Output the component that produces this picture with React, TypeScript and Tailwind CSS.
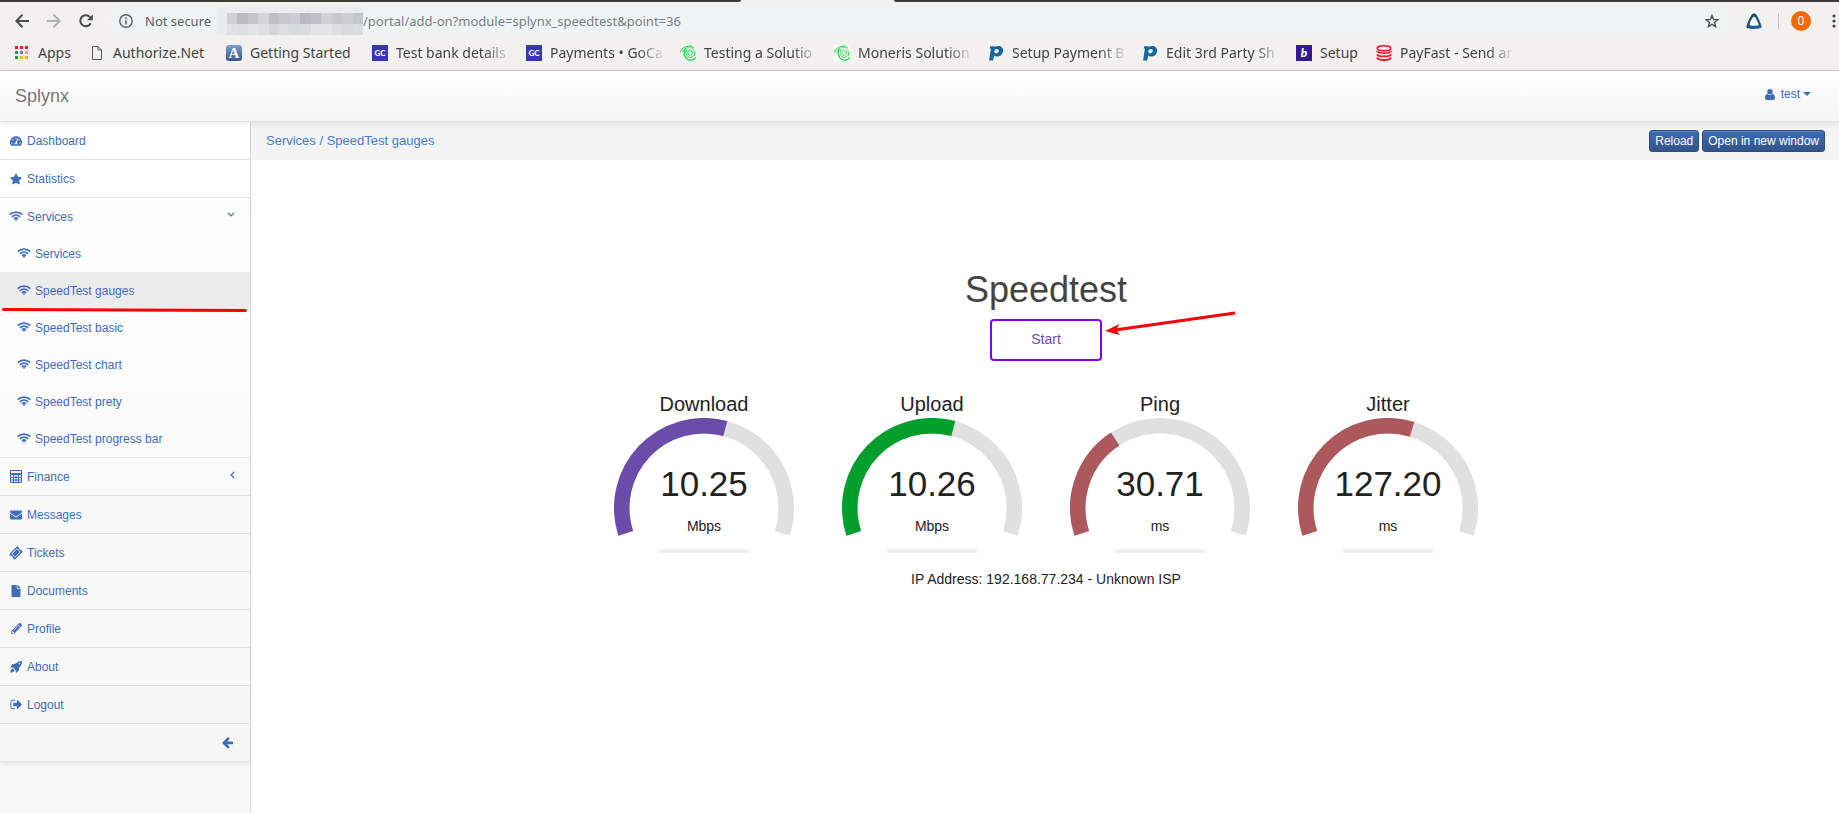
import React from "react";
import { FaEnvelope, FaFile, FaPencilAlt, FaStar, FaTachometerAlt, FaTicketAlt } from "react-icons/fa";

/* ---------- small drawings ---------- */

function AppsIcon() {
  const colors = ["#ee1c25", "#ee1c25", "#ee1c25", "#0f9d58", "#4285f4", "#f4b400", "#0f9d58", "#f4b400", "#f4b400"];
  return (
    <svg width="14" height="14" viewBox="0 0 14 14" aria-hidden="true">
      {colors.map((c, i) => (
        <rect key={i} x={(i % 3) * 5} y={Math.floor(i / 3) * 5} width="3" height="3" fill={c} />
      ))}
    </svg>
  );
}

function PageIcon() {
  return (
    <svg width="10" height="14" viewBox="0 0 10 14" fill="none" stroke="#555" aria-hidden="true">
      <path d="M.5.5H6L9.500 4v9.500H.5zM6 .5V4h3.500" />
    </svg>
  );
}

function LetterA() {
  return (
    <span className="flex size-4 items-center justify-center rounded-[3px] bg-linear-to-b from-[#7ba0cf] to-[#33578a] font-['Liberation_Serif',serif] text-[15px] leading-4 font-bold text-white">
      A
    </span>
  );
}

function GcIcon() {
  return (
    <span className="flex size-4 items-center justify-center bg-[#3636b8] font-['Lato',sans-serif] text-[8px] leading-4 font-black text-white">
      GC
    </span>
  );
}

function SwirlIcon() {
  return (
    <svg width="16" height="16" viewBox="0 0 16 16" fill="none" stroke="#16d23c" strokeLinecap="round" aria-hidden="true">
      <path d="M.6 7C1.500 2.800 6.500 .2 12 1.200" strokeWidth="1" />
      <path d="M2.500 6.500C4 3 8.500 1.300 13.500 2.600" strokeWidth=".7" />
      <path d="M5.200 4C3 7.500 4.200 13.200 9 14.800c3 .8 5.500-.6 6.300-2" strokeWidth="1.300" />
      <path d="M7.500 3.800C5 6 5.600 11 9.200 12.200c3 .7 5.400-1.500 5.500-4.200" strokeWidth=".9" />
      <path d="M10 4.300C7.500 5.400 7.200 9 9.300 10c2.100.7 3.700-1 3.400-2.900-.3-1.300-1.700-1.600-2.500-.9" strokeWidth=".9" />
      <path d="M12.500 3.500c2.500 1.200 3.300 4.500 2.300 7" strokeWidth=".7" />
    </svg>
  );
}

function PIcon() {
  return (
    <svg width="16" height="16" viewBox="0 0 16 16" aria-hidden="true">
      <path
        d="M2.200 1.200h4.600l-.2.900C7.600 1.300 8.800.9 10.200.9c3.300 0 5.100 2 4.800 5-.3 3.300-2.800 5.500-6 5.500-1.200 0-2.200-.3-3-.9l-.8 4.900H1.100L2.900 3.600H1.700zM8.800 4C7.300 4 6.300 5 6.200 6.300 6.100 7.600 6.900 8.400 8.200 8.400c1.500 0 2.500-1 2.600-2.300C10.900 4.800 10.100 4 8.800 4z"
        fill="#12679b"
      />
    </svg>
  );
}

function BIcon() {
  return (
    <span className="flex size-4 items-center justify-center bg-[#311b92] font-['Lato',sans-serif] text-[12px] leading-4 font-black text-white italic">
      b
    </span>
  );
}

function CoinsIcon() {
  return (
    <svg width="16" height="16" viewBox="0 0 16 16" fill="none" stroke="#f5142a" strokeWidth="1.600" aria-hidden="true">
      <ellipse cx="8" cy="3.300" rx="6.800" ry="2.500" />
      <path d="M1 6c1.200 2.800 12.800 2.800 14 0M1 9.300c1.200 2.800 12.800 2.800 14 0M1 12.500c1.200 3.400 12.800 3.400 14 0" strokeWidth="1.900" />
    </svg>
  );
}

function CalculatorIcon() {
  return (
    <svg width="12" height="13" viewBox="0 0 12 13" fill="none" stroke="currentColor" aria-hidden="true">
      <path d="M.5.5h11v12H.5zM.5 3.500h11M.5 4.500h11" />
      <path d="M.5 7.500h11M.5 10h11M3.500 4.500v8M6 4.500v8M8.500 4.500v8" />
    </svg>
  );
}

function WifiIcon() {
  return (
    <svg className="mb-0.5" width="14" height="10" viewBox="0 0 14 10" fill="none" stroke="currentColor" strokeWidth="1.700" aria-hidden="true">
      <path d="M.7 3.700C4.200.2 9.800.2 13.300 3.700" />
      <path d="M2.900 5.900c2.400-2.300 5.800-2.300 8.200 0" />
      <path d="M5 7.900c1.200-1.100 2.800-1.100 4 0" />
      <path d="M7 10 5.700 8.700c.8-.6 1.800-.6 2.600 0z" fill="currentColor" stroke="none" />
    </svg>
  );
}

function RocketIcon() {
  return (
    <svg width="12" height="12" viewBox="0 0 12 12" fill="currentColor" aria-hidden="true">
      <path
        fillRule="evenodd"
        d="M12 0c.1 3-.8 4.900-2.900 6.800L8.900 9.200 6 11.900l-.4-2.600L3 6.600.2 6.200 2.400 3.300l2.800-.3C7 .9 9 0 12 0zM9.400 1.800a.8.8 0 1 0 0 1.600.8.8 0 0 0 0-1.600z"
      />
      <path d="M2.600 7.500 4.600 9.400C3.800 10.800 2.500 11.600.4 11.600.4 9.700 1.100 8.200 2.600 7.500z" />
    </svg>
  );
}

function LogoutIcon() {
  return (
    <svg width="13" height="13" viewBox="0 0 1792 1792" fill="currentColor" aria-hidden="true">
      <path d="M704 1440q0 4 1 20t.5 26.500-3 23.500-10 19.500-20.500 6.500h-320q-119 0-203.500-84.500t-84.500-203.500v-704q0-119 84.500-203.500t203.500-84.500h320q13 0 22.500 9.500t9.500 22.500q0 4 1 20t.5 26.500-3 23.500-10 19.500-20.500 6.500h-320q-66 0-113 47t-47 113v704q0 66 47 113t113 47h312l11.500 1 11.500 3 8 5.500 7 9 2 13.500zm928-544q0 26-19 45l-544 544q-19 19-45 19t-45-19-19-45v-288h-448q-26 0-45-19t-19-45v-384q0-26 19-45t45-19h448v-288q0-26 19-45t45-19 45 19l544 544q19 19 19 45z" />
    </svg>
  );
}

function ArrowLeftIcon() {
  return (
    <svg width="13" height="13" viewBox="0 0 1792 1792" fill="currentColor" aria-hidden="true">
      <path d="M1664 896v128q0 53-32.500 90.500t-84.500 37.500h-704l293 294q38 36 38 90t-38 90l-75 76q-37 37-90 37-52 0-91-37l-651-652q-37-37-37-90 0-52 37-91l651-650q38-38 91-38 52 0 90 38l75 74q38 38 38 91t-38 91l-293 293h704q52 0 84.500 37.500t32.500 90.500z" />
    </svg>
  );
}

function UserIcon() {
  return (
    <svg width="10" height="11" viewBox="0 0 10 11" fill="currentColor" aria-hidden="true">
      <circle cx="5" cy="2.800" r="2.700" />
      <path d="M2.200 4.800C.8 5.300 0 6.800 0 9c0 1.300.7 2 1.800 2h6.400c1.100 0 1.800-.7 1.800-2 0-2.200-.8-3.700-2.200-4.200C6.200 6.400 3.800 6.400 2.200 4.800z" />
    </svg>
  );
}

function Chevron({ open }: { open: boolean }) {
  return open ? (
    <svg className="mr-[15px] mb-1" width="8" height="5" viewBox="0 0 8 5" fill="none" stroke="currentColor" aria-hidden="true">
      <path d="M1 .8 4 3.900 7 .8" strokeWidth="1.200" />
    </svg>
  ) : (
    <svg className="mr-[15px] mb-1" width="5" height="8" viewBox="0 0 5 8" fill="none" stroke="currentColor" aria-hidden="true">
      <path d="M4.200 1 1.100 4l3.100 3" strokeWidth="1.200" />
    </svg>
  );
}

/* ---------- browser bars ---------- */

const maskedHost = [
  ["#cfd2d5", "#b9bbc4", "#c3c7cb", "#d3d4d7", "#bfc2c4", "#c6cacd", "#cccdd3", "#b7b9c6", "#bfc1c6", "#cfd1d4", "#c6c9cc", "#cbcfd3", "#c3c6cc"],
  ["#dfe3e6", "#dde0e3", "#e3e6e8", "#dde1e4", "#d3d7d9", "#dadfe1", "#d6dbdd", "#d9dddd", "#e3e6e8", "#e3e6e8", "#dcdfe1", "#d6dadc", "#dadddf"],
];

function AddressBar() {
  return (
    <div className="flex h-[33px] items-center bg-[#f2f1f0] pt-[5px] pr-0.5 pl-[15px] text-[#4b4b4b]">
      <button type="button" aria-label="Back" className="w-8">
        <svg width="14" height="14" viewBox="0 0 14 14" fill="none" stroke="currentColor" strokeWidth="2" aria-hidden="true">
          <path d="M14 7H1.500M7.500 .8 1.300 7l6.200 6.200" />
        </svg>
      </button>
      <button type="button" aria-label="Forward" className="w-8 text-[#b0b0ae]">
        <svg width="14" height="14" viewBox="0 0 14 14" fill="none" stroke="currentColor" strokeWidth="2" aria-hidden="true">
          <path d="M0 7h12.500M6.500 .8 12.700 7l-6.200 6.200" />
        </svg>
      </button>
      <button type="button" aria-label="Refresh" className="w-7">
        <svg width="14" height="14" viewBox="0 0 14 14" aria-hidden="true">
          <path d="M11.700 9.200A5.500 5.500 0 1 1 11 3.200" fill="none" stroke="currentColor" strokeWidth="2" />
          <path d="M13.900.3v6H8z" fill="currentColor" />
        </svg>
      </button>
      <div className="flex h-7 min-w-0 flex-1 items-center rounded-full bg-[#eef3f4] pr-[10px] pl-3 font-['Noto_Sans',sans-serif] text-[13px] leading-5 whitespace-nowrap">
        <svg className="shrink-0" width="14" height="14" viewBox="0 0 14 14" fill="none" stroke="#5a5f63" strokeWidth="1.400" aria-hidden="true">
          <circle cx="7" cy="7" r="6.200" />
          <path d="M7 6.200v4.200M7 3.600v1.500" strokeWidth="1.600" />
        </svg>
        <span className="ml-3 w-[72px] text-[#5a5f63]">Not secure</span>
        <span className="flex h-7 w-[146px] flex-col bg-[#e9edef] pt-[6px] pl-[10px]" aria-hidden="true">
          {maskedHost.map((row, r) => (
            <span key={r} className="flex h-[11px]">
              {row.map((c, i) => (
                <span key={i} className="flex-1" style={{ backgroundColor: c }} />
              ))}
            </span>
          ))}
        </span>
        <span className="text-[#7b8084]">/portal/add-on?module=splynx_speedtest&amp;point=36</span>
        <button type="button" aria-label="Bookmark this page" className="ml-auto">
          <svg width="14" height="14" viewBox="0 0 24 24" fill="none" stroke="#4b4f52" strokeWidth="2.400" aria-hidden="true">
            <path d="m12 2.500 2.700 6.700 7.200.6-5.500 4.700 1.700 7.100L12 17.800l-6.100 3.800 1.700-7.100L2.100 9.800l7.200-.6z" />
          </svg>
        </button>
      </div>
      <svg className="ml-[17px]" width="16" height="16" viewBox="0 0 16 16" fill="none" aria-hidden="true">
        <defs>
          <linearGradient id="tri" x1="0" y1="0" x2="1" y2="1">
            <stop offset="0" stopColor="#17384c" />
            <stop offset="1" stopColor="#1c6fb0" />
          </linearGradient>
        </defs>
        <path d="M5.500 2C6.500 0 9.500 0 10.500 2c2.200 3.600 4 7.500 5 11 .3 1.200-.2 2-1.500 2.300-4 .8-8 .8-12 0C.7 15 .2 14.200.5 13c1-3.500 2.800-7.400 5-11z" fill="url(#tri)" />
        <path d="M8 3.500c-1.300 0-4.500 6.800-4.500 8.300 0 1.400 9 1.400 9 0C12.500 10.300 9.300 3.500 8 3.500z" fill="#fff" />
      </svg>
      <span className="mx-4 h-4 w-px bg-[#c4c6c8]" />
      <button
        type="button"
        aria-label="Profile 0"
        className="-ml-1 size-5 rounded-full bg-[#f56a00] font-['Noto_Sans',sans-serif] text-[12px] leading-5 text-white"
      >
        0
      </button>
      <button type="button" aria-label="Browser menu" className="ml-5">
        <svg width="6" height="14" viewBox="0 0 6 14" fill="#444" aria-hidden="true">
          <circle cx="3" cy="2" r="1.600" />
          <circle cx="3" cy="7" r="1.600" />
          <circle cx="3" cy="12" r="1.600" />
        </svg>
      </button>
    </div>
  );
}

type Bookmark = { icon: React.ReactNode; label: string; width: string; cut?: boolean };

const bookmarks: Bookmark[] = [
  { icon: <AppsIcon />, label: "Apps", width: "w-[75px]" },
  { icon: <PageIcon />, label: "Authorize.Net", width: "w-[137px]" },
  { icon: <LetterA />, label: "Getting Started", width: "w-[146px]" },
  { icon: <GcIcon />, label: "Test bank details", width: "w-[154px]", cut: true },
  { icon: <GcIcon />, label: "Payments • GoCa", width: "w-[154px]", cut: true },
  { icon: <SwirlIcon />, label: "Testing a Solutio", width: "w-[154px]", cut: true },
  {
    icon: (
      <span className="block bg-white">
        <SwirlIcon />
      </span>
    ),
    label: "Moneris Solution",
    width: "w-[154px]",
    cut: true,
  },
  { icon: <PIcon />, label: "Setup Payment B", width: "w-[154px]", cut: true },
  { icon: <PIcon />, label: "Edit 3rd Party Sh", width: "w-[154px]", cut: true },
  { icon: <BIcon />, label: "Setup", width: "w-[80px]" },
  { icon: <CoinsIcon />, label: "PayFast - Send ar", width: "w-[154px]", cut: true },
];

function BookmarksBar() {
  return (
    <nav
      aria-label="Bookmarks"
      className="flex h-9 items-center overflow-hidden border-b border-[#c9c9c9] bg-[#f2f1f0] pl-[14px] font-['Noto_Sans',sans-serif] text-[14px] leading-5 text-[#444]"
    >
      {bookmarks.map((b) => (
        <a key={b.label} href="#" className={`flex shrink-0 items-center gap-2 whitespace-nowrap ${b.width}`}>
          <span className="flex w-4 shrink-0 justify-center">{b.icon}</span>
          <span className={b.cut ? "w-[116px] mask-[linear-gradient(to_right,black_76%,transparent)]" : ""}>
            {b.label}
          </span>
        </a>
      ))}
    </nav>
  );
}

/* ---------- portal ---------- */

function PortalHeader() {
  return (
    <header className="relative flex h-[51px] items-center justify-between border-b border-[#e2e2e2] bg-linear-to-b from-white to-[#f6f6f6] pr-7 pl-[15px] shadow-[0_2px_6px_rgba(0,0,0,0.08)]">
      <a href="#" className="text-[18px] leading-6 text-[#777]">
        Splynx
      </a>
      <button type="button" className="mb-1 flex items-center text-[12px] leading-4 text-[#3f6db8]">
        <UserIcon />
        <span className="mr-[3px] ml-1.5">test</span>
        <svg width="8" height="4" viewBox="0 0 8 4" fill="currentColor" aria-hidden="true">
          <path d="M0 0h8L4 4z" />
        </svg>
      </button>
    </header>
  );
}

type Item = { label: string; icon: React.ReactNode; open?: boolean; children?: string[] };

const items: Item[] = [
  { label: "Dashboard", icon: <FaTachometerAlt /> },
  { label: "Statistics", icon: <FaStar /> },
  {
    label: "Services",
    icon: <WifiIcon />,
    open: true,
    children: [
      "Services",
      "SpeedTest gauges",
      "SpeedTest basic",
      "SpeedTest chart",
      "SpeedTest prety",
      "SpeedTest progress bar",
    ],
  },
  { label: "Finance", icon: <CalculatorIcon />, open: false },
  { label: "Messages", icon: <FaEnvelope /> },
  { label: "Tickets", icon: <FaTicketAlt className="-rotate-45" /> },
  { label: "Documents", icon: <FaFile /> },
  { label: "Profile", icon: <FaPencilAlt className="size-[11px]" /> },
  { label: "About", icon: <RocketIcon /> },
  { label: "Logout", icon: <LogoutIcon /> },
];

function Sidebar() {
  return (
    <aside className="w-[251px] shrink-0 border-r border-[#dcdcdc] bg-[#f8f8f8] text-[12px] leading-4 text-[#3f6db8]">
      <ul className="rounded-b-sm bg-linear-to-b from-white to-[#f6f6f6] shadow-[0_2px_4px_rgba(0,0,0,0.08)]">
        {items.map((item) => (
          <li key={item.label} className="border-b border-[#e2e2e2]">
            <a href="#" className="flex h-[37px] items-center pl-[9px]">
              <span className="mr-1 flex w-[14px] justify-center text-[12px]">{item.icon}</span>
              <span className="flex-1">{item.label}</span>
              {item.open !== undefined && <Chevron open={item.open} />}
            </a>
            {item.children && (
              <ul>
                {item.children.map((label) => {
                  const current = label === "SpeedTest gauges";
                  return (
                    <li key={label} className={current ? "relative bg-[#ececec]" : ""}>
                      <a href="#" className="flex h-[37px] items-center pl-[17px]" aria-current={current ? "page" : undefined}>
                        <span className="mr-1 flex w-[14px] justify-center">
                          <WifiIcon />
                        </span>
                        {label}
                      </a>
                      {current && (
                        <svg
                          className="absolute top-[35px] left-0 z-10 h-1.5 w-full"
                          viewBox="0 0 250 6"
                          preserveAspectRatio="none"
                          aria-hidden="true"
                        >
                          <path d="M3.500 2.500 245.500 3.500" stroke="#ff0000" strokeWidth="3" strokeLinecap="round" />
                        </svg>
                      )}
                    </li>
                  );
                })}
              </ul>
            )}
          </li>
        ))}
        <li className="flex h-[38px] items-center justify-end border-b border-[#e2e2e2] pr-4">
          <button type="button" aria-label="Collapse menu">
            <ArrowLeftIcon />
          </button>
        </li>
      </ul>
    </aside>
  );
}

function arc(degrees: number) {
  const r = 82.25;
  const point = (deg: number) => {
    const a = ((198 - deg) * Math.PI) / 180;
    return `${(90 + r * Math.cos(a)).toFixed(2)} ${(90 - r * Math.sin(a)).toFixed(2)}`;
  };
  return `M${point(0)}A${r} ${r} 0 ${degrees > 180 ? 1 : 0} 1 ${point(degrees)}`;
}

type GaugeProps = { label: string; value: string; unit: string; color: string; sweep: number };

function Gauge({ label, value, unit, color, sweep }: GaugeProps) {
  return (
    <section className="flex w-[228px] flex-col items-center text-[#222]">
      <h2 className="mb-px text-[20px] leading-[26px]">{label}</h2>
      <div className="grid w-[180px]">
        <svg className="[grid-area:1/1]" width="180" height="118" viewBox="0 0 180 118" fill="none" strokeWidth="15.500" aria-hidden="true">
          <path d={arc(216)} stroke="#e0e0e0" />
          <path d={arc(sweep)} stroke={color} />
        </svg>
        <div className="flex flex-col items-center gap-3 pt-[46px] [grid-area:1/1]">
          <span className="text-[35px] leading-10">{value}</span>
          <span className="-mb-1 text-[14px] leading-5">{unit}</span>
        </div>
      </div>
      <div className="mt-[13px] h-1 w-[90px] bg-[#eee]" />
    </section>
  );
}

const gauges: GaugeProps[] = [
  { label: "Download", value: "10.25", unit: "Mbps", color: "#6a4cab", sweep: 123 },
  { label: "Upload", value: "10.26", unit: "Mbps", color: "#009e2d", sweep: 123 },
  { label: "Ping", value: "30.71", unit: "ms", color: "#ad585d", sweep: 75 },
  { label: "Jitter", value: "127.20", unit: "ms", color: "#ad585d", sweep: 125 },
];

function ToolbarButton({ children }: { children: React.ReactNode }) {
  return (
    <button
      type="button"
      className="h-[22px] rounded-[3px] border border-[#2b4a80] bg-linear-to-b from-[#3f6cb5] to-[#315488] px-[5px] text-[12px] leading-4 text-white shadow-[inset_0_1px_0_rgba(255,255,255,0.15)]"
    >
      {children}
    </button>
  );
}

function SpeedTest() {
  return (
    <div className="flex flex-col items-center pt-[110px] pl-0.5">
      <h1 className="text-[36px] leading-10 text-[#444]">Speedtest</h1>
      <div className="relative mt-[9px]">
        <button
          type="button"
          className="block h-[42px] w-28 rounded-[4px] border-2 border-[#7f00ff] bg-white pb-0.5 text-[14px] leading-5 text-[#6a4cab]"
        >
          Start
        </button>
        <svg className="absolute -top-2 left-full ml-0.5" width="134" height="28" viewBox="0 0 134 28" aria-hidden="true">
          <path d="M11 19 131 2" stroke="#ff0000" strokeWidth="3" />
          <path d="M1 20 15.300 13 12 19 16 24z" fill="#ff0000" />
        </svg>
      </div>
      <div className="mt-[30px] flex flex-wrap justify-center">
        {gauges.map((g) => (
          <Gauge key={g.label} {...g} />
        ))}
      </div>
      <p className="mt-4 text-[14px] leading-5 text-[#222]">IP Address: 192.168.77.234 - Unknown ISP</p>
    </div>
  );
}

export default function App() {
  return (
    <div className="flex min-h-screen flex-col bg-white font-['Liberation_Sans',Arial,sans-serif]">
      <div className="flex h-0.5 bg-[#f2f1f0]">
        <div className="w-[741px] rounded-br-sm bg-[#3c3b37]" />
        <div className="ml-[153px] flex-1 rounded-bl-sm bg-[#3c3b37]" />
      </div>
      <AddressBar />
      <BookmarksBar />
      <PortalHeader />
      <div className="flex flex-1">
        <Sidebar />
        <main className="min-w-0 flex-1">
          <div className="flex h-[38px] items-center justify-between bg-[#f4f4f4] pr-[14px] pl-[15px]">
            <nav aria-label="Breadcrumb" className="text-[13px] leading-5 text-[#477cc9]">
              <a href="#">Services</a> / <a href="#">SpeedTest gauges</a>
            </nav>
            <div className="flex gap-[3px]">
              <ToolbarButton>Reload</ToolbarButton>
              <ToolbarButton>Open in new window</ToolbarButton>
            </div>
          </div>
          <SpeedTest />
        </main>
      </div>
    </div>
  );
}
